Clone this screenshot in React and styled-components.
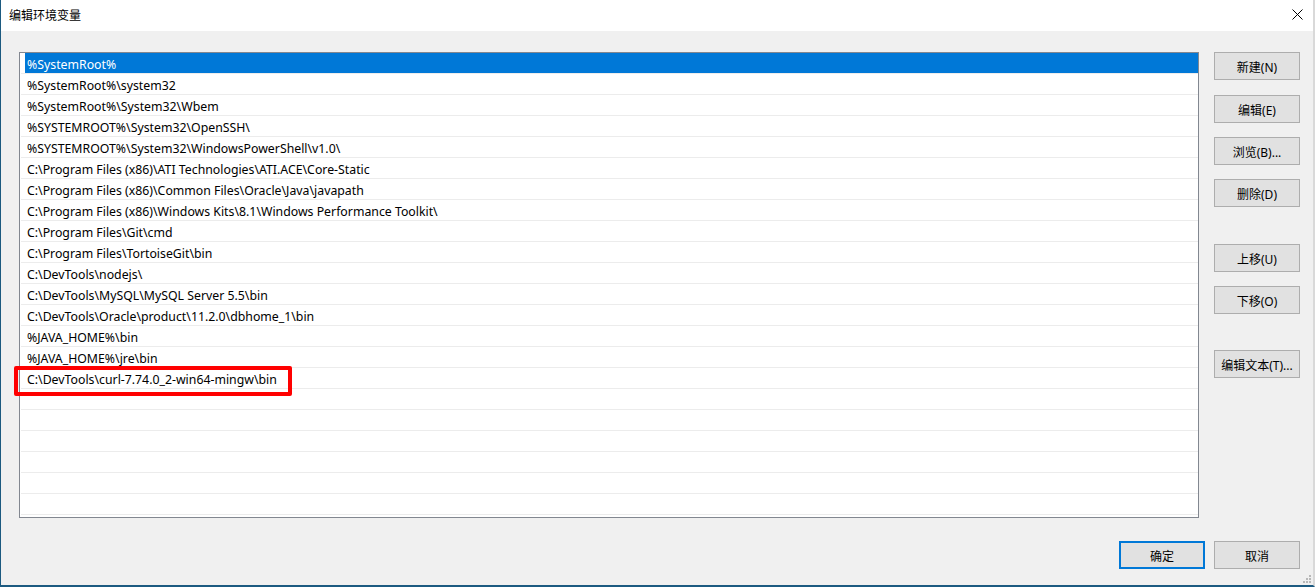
import React from "react";
import styled, { createGlobalStyle } from "styled-components";

const paths = [
  "%SystemRoot%",
  "%SystemRoot%\\system32",
  "%SystemRoot%\\System32\\Wbem",
  "%SYSTEMROOT%\\System32\\OpenSSH\\",
  "%SYSTEMROOT%\\System32\\WindowsPowerShell\\v1.0\\",
  "C:\\Program Files (x86)\\ATI Technologies\\ATI.ACE\\Core-Static",
  "C:\\Program Files (x86)\\Common Files\\Oracle\\Java\\javapath",
  "C:\\Program Files (x86)\\Windows Kits\\8.1\\Windows Performance Toolkit\\",
  "C:\\Program Files\\Git\\cmd",
  "C:\\Program Files\\TortoiseGit\\bin",
  "C:\\DevTools\\nodejs\\",
  "C:\\DevTools\\MySQL\\MySQL Server 5.5\\bin",
  "C:\\DevTools\\Oracle\\product\\11.2.0\\dbhome_1\\bin",
  "%JAVA_HOME%\\bin",
  "%JAVA_HOME%\\jre\\bin",
  "C:\\DevTools\\curl-7.74.0_2-win64-mingw\\bin",
];

const TOTAL_ROWS = 22;

const sideButtons = [
  { label: "新建(N)", gap: 0 },
  { label: "编辑(E)", gap: 15 },
  { label: "浏览(B)...", gap: 14 },
  { label: "删除(D)", gap: 14 },
  { label: "上移(U)", gap: 37 },
  { label: "下移(O)", gap: 14 },
  { label: "编辑文本(T)...", gap: 36 },
];

const App = () => {
  const rows = [];
  for (let i = 0; i < TOTAL_ROWS; i++) rows.push(paths[i] || "");

  return (
    <>
      <GlobalStyle />
      <Window>
        <TitleBar>
          <Title>编辑环境变量</Title>
          <CloseBtn>
            <svg width="11" height="11" viewBox="0 0 11 11">
              <path d="M0.5 0.5 L10.5 10.5 M10.5 0.5 L0.5 10.5" stroke="#000" strokeWidth="1" />
            </svg>
          </CloseBtn>
        </TitleBar>
        <Body>
          <Main>
            <ListBox>
              {rows.map((text, i) => (
                <Row key={i}>
                  <Cell $selected={i === 0}>{text}</Cell>
                </Row>
              ))}
              <Highlight />
            </ListBox>
            <SideColumn>
              {sideButtons.map((b) => (
                <Button key={b.label} $gap={b.gap}>
                  {b.label}
                </Button>
              ))}
            </SideColumn>
          </Main>
          <Footer>
            <Button $primary>确定</Button>
            <Button>取消</Button>
          </Footer>
        </Body>
        <Grip>
          <svg width="8" height="8" viewBox="0 0 8 8">
            <rect x="6" y="0" width="2" height="2" fill="#b8b8b8" />
            <rect x="3" y="3" width="2" height="2" fill="#b8b8b8" />
            <rect x="6" y="3" width="2" height="2" fill="#b8b8b8" />
            <rect x="0" y="6" width="2" height="2" fill="#b8b8b8" />
            <rect x="3" y="6" width="2" height="2" fill="#b8b8b8" />
            <rect x="6" y="6" width="2" height="2" fill="#b8b8b8" />
          </svg>
        </Grip>
      </Window>
    </>
  );
};

export default App;

const GlobalStyle = createGlobalStyle`
  html, body {
    margin: 0;
    padding: 0;
    background: #f0f0f0;
  }
  * {
    box-sizing: border-box;
  }
`;

const Window = styled.div`
  position: relative;
  width: 1315px;
  height: 587px;
  background: #f0f0f0;
  border-left: 1px solid #1c5a80;
  border-bottom: 2px solid #1c5a80;
  border-right: 2px solid #d9d9d9;
  display: flex;
  flex-direction: column;
  font-family: "Noto Sans", "Noto Sans CJK SC", sans-serif;
  font-size: 12px;
  color: #000;
`;

const TitleBar = styled.div`
  height: 31px;
  background: #fff;
  display: flex;
  align-items: center;
  justify-content: space-between;
  padding: 0 9px 2px 8px;
  flex-shrink: 0;
`;

const Title = styled.div`
  font-family: "Noto Sans CJK SC", sans-serif;
  font-size: 12px;
`;

const CloseBtn = styled.div`
  display: flex;
  align-items: center;
  margin-right: 1px;
`;

const Body = styled.div`
  flex: 1;
  display: flex;
  flex-direction: column;
  padding: 21px 0 0 18px;
`;

const Main = styled.div`
  display: flex;
  gap: 15px;
  align-items: flex-start;
`;

const ListBox = styled.div`
  position: relative;
  width: 1180px;
  height: 466px;
  background: #fff;
  border: 1px solid #828790;
  padding: 0 0 0 1px;
`;

const Row = styled.div`
  height: 21px;
  border-bottom: 1px solid #ececec;
  padding-left: 4px;
  display: flex;
`;

const Cell = styled.div`
  flex: 1;
  height: 20px;
  padding: 2px 0 0 2px;
  line-height: 20px;
  font-size: 12.3px;
  white-space: nowrap;
  background: ${(p) => (p.$selected ? "#0078d7" : "transparent")};
  color: ${(p) => (p.$selected ? "#fff" : "#000")};
`;

const Highlight = styled.div`
  position: absolute;
  left: -6px;
  top: 313px;
  width: 278px;
  height: 30px;
  border: 4px solid #ff0000;
  border-radius: 2px;
  pointer-events: none;
`;

const SideColumn = styled.div`
  display: flex;
  flex-direction: column;
`;

const Button = styled.div`
  width: 86px;
  height: 28px;
  margin-top: ${(p) => p.$gap || 0}px;
  background: #e1e1e1;
  border: ${(p) => (p.$primary ? "2px solid #0078d7" : "1px solid #adadad")};
  display: flex;
  align-items: center;
  justify-content: center;
  padding-top: 1px;
  font-family: "Noto Sans", "Noto Sans CJK SC", sans-serif;
  font-size: 12px;
  white-space: nowrap;
`;

const Footer = styled.div`
  display: flex;
  justify-content: flex-end;
  gap: 9px;
  margin-top: 23px;
  padding-right: 13px;
`;

const Grip = styled.div`
  position: absolute;
  right: 2px;
  bottom: 2px;
  line-height: 0;
`;
